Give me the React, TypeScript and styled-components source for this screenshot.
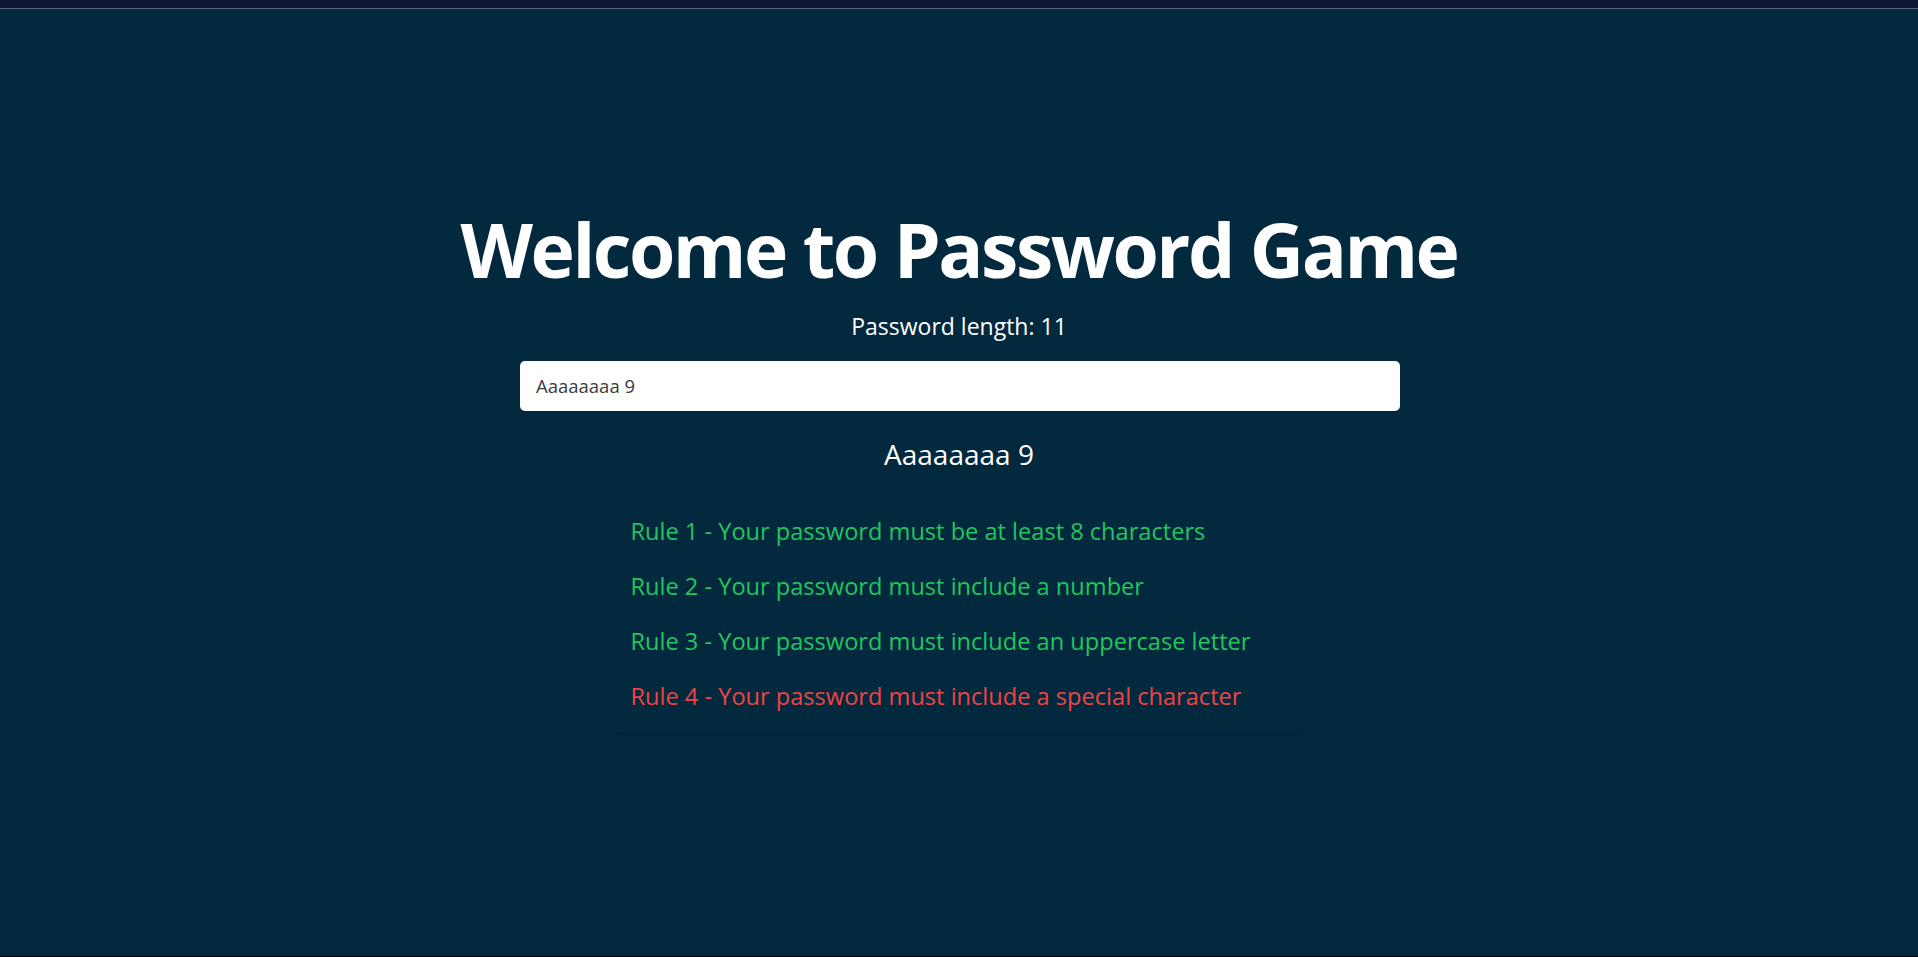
import React, { useState } from "react";
import styled, { createGlobalStyle } from "styled-components";

const GlobalStyle = createGlobalStyle`
  html, body {
    margin: 0;
    padding: 0;
    background: #03293f;
  }
  * { box-sizing: border-box; }
`;

const Page = styled.div`
  min-height: 100vh;
  display: flex;
  flex-direction: column;
  background: #03293f;
  font-family: "Open Sans", "Noto Sans", sans-serif;
  color: #ffffff;
`;

const TopBar = styled.div`
  height: 9px;
  background: #0e1733;
  border-bottom: 1px solid #5b6079;
  flex-shrink: 0;
`;

const BottomLine = styled.div`
  height: 1px;
  background: #000000;
  flex-shrink: 0;
`;

const Main = styled.main`
  flex: 1;
  display: flex;
  flex-direction: column;
  align-items: center;
  justify-content: center;
  padding-bottom: 30px;
`;

const Title = styled.h1`
  margin: 0;
  font-size: 75px;
  font-weight: 700;
  line-height: 90px;
  letter-spacing: -2.5px;
`;

const LengthText = styled.p`
  margin: 17px 0 20px;
  font-size: 23px;
  line-height: 30px;
`;

const Input = styled.input`
  width: 880px;
  height: 50px;
  margin-left: 2px;
  border: none;
  border-radius: 5px;
  padding: 0 16px;
  font-family: "Open Sans", "Noto Sans", sans-serif;
  font-size: 18.5px;
  color: #3b3b3b;
  background: #ffffff;
  outline: none;
`;

const Echo = styled.h2`
  margin: 25px 0 24px;
  font-size: 28px;
  font-weight: 400;
  line-height: 36px;
`;

const RuleList = styled.ul`
  list-style: none;
  margin: 0;
  padding: 8px 0 8px 14px;
  width: 685px;
  box-shadow: 0 3px 3px -1px rgba(0, 0, 0, 0.12);
`;

const Rule = styled.li<{ $ok: boolean }>`
  font-size: 23.6px;
  line-height: 55px;
  color: ${(p) => (p.$ok ? "#22c55e" : "#ef4444")};
`;

const rules = [
  { text: "Rule 1 - Your password must be at least 8 characters", test: (s: string) => s.length >= 8 },
  { text: "Rule 2 - Your password must include a number", test: (s: string) => /\d/.test(s) },
  { text: "Rule 3 - Your password must include an uppercase letter", test: (s: string) => /[A-Z]/.test(s) },
  { text: "Rule 4 - Your password must include a special character", test: (s: string) => /[^A-Za-z0-9\s]/.test(s) },
];

export default function App() {
  const [pw, setPw] = useState("Aaaaaaaa 9 ");
  return (
    <>
      <GlobalStyle />
      <Page>
        <TopBar />
        <Main>
          <Title>Welcome to Password Game</Title>
          <LengthText>Password length: {pw.length}</LengthText>
          <Input value={pw} onChange={(e) => setPw(e.target.value)} />
          <Echo>{pw}</Echo>
          <RuleList>
            {rules.map((r) => (
              <Rule key={r.text} $ok={r.test(pw)}>
                {r.text}
              </Rule>
            ))}
          </RuleList>
        </Main>
        <BottomLine />
      </Page>
    </>
  );
}
